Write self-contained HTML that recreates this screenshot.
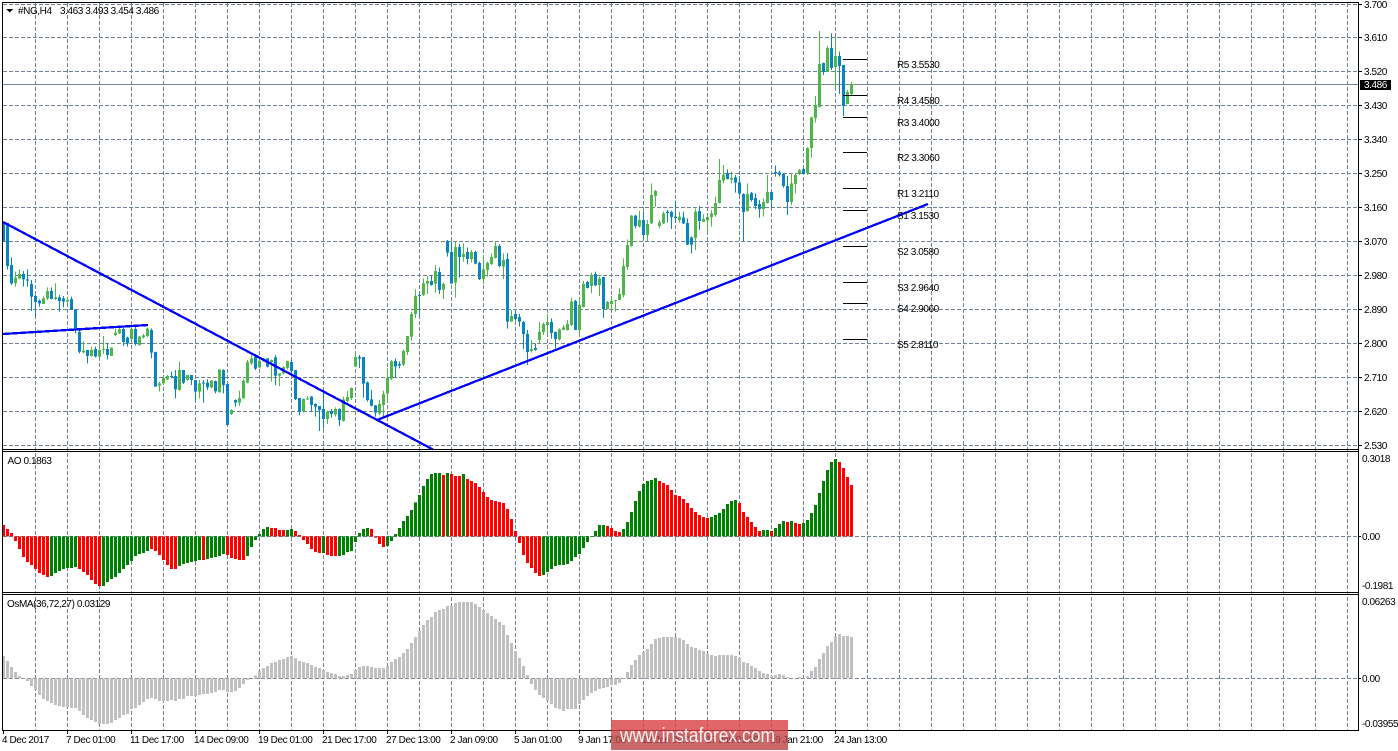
<!DOCTYPE html>
<html><head><meta charset="utf-8"><title>#NG,H4</title>
<style>
html,body{margin:0;padding:0;background:#fff;width:1398px;height:751px;overflow:hidden}
svg{display:block}
text{font-family:"Liberation Sans",sans-serif;font-size:10px;letter-spacing:-.42px;fill:#000}
.g{stroke:#708090;stroke-width:1;stroke-dasharray:4 2;fill:none}
</style></head><body>
<svg width="1398" height="751" viewBox="0 0 1398 751" xmlns="http://www.w3.org/2000/svg" shape-rendering="crispEdges">
<defs><linearGradient id="w" x1="0" y1="0" x2="0" y2="1"><stop offset="0" stop-color="#d84045"/><stop offset=".4" stop-color="#d84045"/><stop offset=".5" stop-color="#bb4244"/><stop offset="1" stop-color="#bb4244"/></linearGradient></defs>
<!-- grid -->
<path class="g" d="M3 4.5H1358M3 37.5H1358M3 71.5H1358M3 105.5H1358M3 139.5H1358M3 173.5H1358M3 207.5H1358M3 241.5H1358M3 275.5H1358M3 309.5H1358M3 343.5H1358M3 377.5H1358M3 411.5H1358M3 445.5H1358M3 536.5H1358M3 678.5H1358"/>
<path class="g" d="M35.5 3V730M67.5 3V730M99.5 3V730M131.5 3V730M163.5 3V730M195.5 3V730M227.5 3V730M259.5 3V730M291.5 3V730M323.5 3V730M355.5 3V730M387.5 3V730M419.5 3V730M451.5 3V730M483.5 3V730M515.5 3V730M547.5 3V730M579.5 3V730M611.5 3V730M643.5 3V730M675.5 3V730M707.5 3V730M739.5 3V730M771.5 3V730M803.5 3V730M835.5 3V730M867.5 3V730M899.5 3V730M931.5 3V730M963.5 3V730M995.5 3V730M1027.5 3V730M1059.5 3V730M1091.5 3V730M1123.5 3V730M1155.5 3V730M1187.5 3V730M1219.5 3V730M1251.5 3V730M1283.5 3V730M1315.5 3V730M1347.5 3V730"/>
<rect x="3" y="84" width="1355" height="1" fill="#778899"/>
<!-- candles group 1 -->
<g transform="translate(3.5,230) scale(4,.33333)" fill="none">
<path stroke="#0685c4" stroke-width=".25" d="M0 -21V35M1 -21V118M2 82V165M5 123V170M6 118V170M7 150V243M8 195V258M9 208V230M12 172V208M14 195V245M15 198V232M17 200V240M18 238V310M19 300V370M21 360V400M23 350V382M26 340V388M30 292V348M31 320V350M33 290V347M37 295V385M38 365V470M42 425V445M43 420V505M45 420V462M47 435V465M48 450V512M50 450V518M51 448V480M53 452V490M55 418V490M56 462V585M58 508V530M63 372V420M66 385V412M68 375V465M72 390V430M73 420V510M74 504V556M77 498V545M78 520V560M79 528V603M80 483V595M82 537V562M84 535V588"/>
<path stroke="#0685c4" stroke-width=".75" d="M0 -21V35M1 -21V108M2 105V160M5 132V148M6 148V152M7 162V200M8 198V216M9 212V220M12 183V207M14 202V213M15 205V215M17 207V238M18 238V295M19 306V365M21 360V378M23 357V380M26 357V375M30 297V336M31 323V340M33 297V342M37 300V368M38 366V470M42 438V441M43 438V478M45 420V458M47 435V450M48 450V485M50 458V461M51 458V472M53 453V484M55 420V465M56 462V585M58 510V518M63 380V416M66 385V410M68 382V437M72 396V423M73 420V507M74 504V545M77 500V525M78 522V530M79 528V540M80 537V567M82 543V552M84 537V570"/>
<path stroke="#4db848" stroke-width=".25" d="M3 125V170M4 118V148M10 200V222M11 172V210M13 160V210M16 200V218M20 335V370M22 350V380M24 340V382M25 318V372M27 352V378M28 295V318M29 290V312M32 290V330M34 318V347M35 312V325M36 292V322M39 455V485M40 438V462M41 435V450M44 395V482M46 435V452M49 450V505M52 450V475M54 418V487M57 538V555M59 482V528M60 448V505M61 390V460M62 375V405M64 385V415M65 383V395M67 388V455M69 430V468M70 408V433M71 392V418M75 505V548M76 498V510M81 542V582M83 532V560"/>
<path stroke="#4db848" stroke-width=".75" d="M3 143V160M4 132V145M10 205V222M11 183V205M13 202V207M16 210V215M20 362V367M22 360V378M24 360V380M25 357V360M27 353V378M28 308V315M29 297V310M32 297V327M34 320V345M35 316V322M36 296V318M39 460V467M40 444V460M41 438V448M44 420V480M46 435V450M49 460V485M52 452V472M54 418V487M57 540V552M59 504V518M60 452V505M61 396V458M62 386V400M64 392V412M65 385V393M67 390V396M69 430V437M70 412V430M71 393V414M75 507V545M76 505V508M81 545V567M83 537V553"/>
</g>
<!-- candles group 2 -->
<g transform="translate(3.5,220) scale(4,.33333)" fill="none">
<path stroke="#0685c4" stroke-width=".25" d="M89 405V444M90 411V533M91 485V545M92 510V560M93 555V590M98 415V472M99 425V445M104 222V290M107 165V197M109 143V222M111 60V110M112 65V190M114 72V173M116 82V133M118 92V133M119 125V180M124 72V142M126 99V326M128 270V302M129 282V320M130 303V387M131 330V435M133 370V392M137 295V356M138 335V385M143 240V330M146 183V205M148 155V198M150 171V294"/>
<path stroke="#0685c4" stroke-width=".75" d="M89 411V416M90 411V491M91 487V540M92 538V557M93 556V578M98 423V440M99 432V437M104 225V228M107 183V195M109 156V210M111 63V98M112 96V191M114 81V111M116 96V117M118 96V131M119 129V177M124 78V138M126 117V305M128 282V297M129 291V305M130 306V342M131 342V396M133 384V390M137 306V339M138 336V357M143 243V330M146 186V204M148 162V196M150 171V267"/>
<path stroke="#4db848" stroke-width=".25" d="M85 530V605M86 513V548M87 503V540M88 398V440M94 540V585M95 512V590M96 445V545M97 420V480M100 388V438M101 348V405M102 275V362M103 208V295M105 175V228M106 168V222M108 135V218M110 188V237M113 63V233M115 70V125M117 90V127M120 105V192M121 125V170M122 100V135M123 63V115M125 100V177M127 270V305M132 360V398M134 306V370M135 308V345M136 282V340M139 325V362M140 315V330M141 300V332M142 232V318M144 237V345M145 183V262M147 158V220M149 170V228M151 243V268M152 228V270M153 240V275M154 205V240M155 115V232M156 58V150"/>
<path stroke="#4db848" stroke-width=".75" d="M85 538V603M86 531V543M87 504V534M88 411V440M94 552V580M95 522V555M96 473V521M97 424V476M100 393V434M101 348V396M102 282V350M103 228V282M105 190V225M106 183V191M108 153V191M110 192V209M113 81V188M115 102V111M117 96V117M120 148V177M121 129V150M122 111V132M123 78V114M125 120V140M127 288V305M132 387V393M134 336V360M135 312V336M136 306V315M139 328V358M140 322V330M141 312V330M142 244V315M144 255V330M145 192V261M147 165V198M149 175V195M151 246V267M152 243V252M153 240V243M154 222V240M155 138V225M156 75V141"/>
</g>
<!-- candles group 3 -->
<g transform="translate(3.5,20) scale(4,.33333)" fill="none">
<path stroke="#0685c4" stroke-width=".25" d="M158 585V625M160 575V655M166 570V607M167 572V627M168 542V605M170 575V612M171 595V675M172 650V700M174 558V630M181 448V478M183 465V518M184 468V525M185 520V663M187 516V545M188 520V568M189 540V593M192 516V565M193 437V470M194 452V470M195 460V503M196 468V585M200 445V463M205 128V165M207 40V150M209 95V222M210 135V288"/>
<path stroke="#0685c4" stroke-width=".75" d="M158 587V618M160 600V645M166 575V579M167 576V591M168 590V594M170 593V610M171 609V674M172 652V674M174 573V603M181 459V477M183 472V488M184 487V521M185 522V576M187 519V540M188 534V558M189 552V567M192 516V540M193 456V460M194 457V464M195 462V498M196 498V546M200 447V462M205 129V156M207 84V144M209 108V138M210 135V258"/>
<path stroke="#4db848" stroke-width=".25" d="M157 585V680M159 573V622M161 600V663M162 490V612M163 510V560M164 600V625M165 575V612M169 575V608M173 565V690M175 583V606M176 585V640M177 570V620M178 530V590M179 417V550M180 435V490M182 455V490M186 490V575M190 535V590M191 465V550M197 460V555M198 460V520M199 447V465M201 382V465M202 290V412M203 228V308M204 33V262M206 78V155M208 48V203M211 210V252M212 186V228"/>
<path stroke="#4db848" stroke-width=".75" d="M157 587V678M159 600V620M161 612V645M162 525V610M163 513V528M164 607V618M165 580V610M169 590V600M173 575V654M175 597V606M176 591V601M177 580V591M178 549V585M179 480V549M180 465V482M182 474V479M186 522V573M190 546V567M191 516V549M197 490V546M198 465V492M199 450V462M201 384V459M202 292V384M203 255V294M204 132V261M206 84V155M208 108V141M211 216V252M212 192V222"/>
</g>
<!-- pivots -->
<path stroke="#000" stroke-width="1" fill="none" d="M843 59.5H867M843 95.5H867M843 117.5H867M843 152.5H867M843 188.5H867M843 210.5H867M843 246.5H867M843 282.5H867M843 303.5H867M843 339.5H867"/>
<!-- trend lines -->
<g fill="none" stroke="#0000ff" stroke-width="2.3">
<path d="M3 222L433 449.5"/>
<path d="M3 334L148 325"/>
<path d="M377 420L928 204"/>
</g>
<!-- AO and OsMA histograms -->
<g transform="translate(3.5,440) scale(4,.33333)" fill="none" stroke-width=".75">
<path stroke="#ff0000" d="M0 289V255M1 289V267M2 289V279M3 289V303M4 289V327M5 289V351M6 289V366M7 289V375M8 289V387M9 289V399M10 289V405M11 289V411M19 289V387M20 289V396M21 289V405M22 289V420M23 289V432M24 289V438M37 289V327M38 289V333M39 289V345M40 289V360M41 289V375M42 289V387M43 289V387M50 289V360M56 289V345M57 289V354M58 289V357M59 289V360M60 289V360M67 289V264M68 289V264M69 289V270M70 289V270M73 289V273M74 289V285M75 289V300M76 289V312M77 289V327M78 289V336M79 289V339M81 289V345M82 289V348M83 289V348M92 289V267M93 289V293M94 289V312M95 289V321M110 289V105M112 289V102M113 289V108M114 289V108M116 289V117M117 289V123M118 289V129M119 289V141M120 289V156M121 289V171M122 289V180M123 289V183M124 289V186M125 289V189M126 289V207M127 289V237M128 289V273M129 289V309M130 289V345M131 289V369M132 289V384M133 289V399M134 289V408M151 289V258M152 289V264M153 289V273M154 289V276M164 289V123M165 289V129M166 289V135M167 289V150M168 289V165M169 289V168M170 289V177M171 289V189M172 289V204M173 289V216M174 289V225M175 289V231M176 289V234M184 289V189M185 289V216M186 289V231M187 289V246M188 289V261M189 289V273M192 289V273M196 289V246M198 289V249M199 289V252M209 289V66M210 289V84M211 289V111M212 289V135"/>
<path stroke="#008000" d="M12 289V408M13 289V399M14 289V393M15 289V387M16 289V384M17 289V384M18 289V381M25 289V438M26 289V426M27 289V417M28 289V411M29 289V399M30 289V387M31 289V375M32 289V363M33 289V348M34 289V342M35 289V339M36 289V333M44 289V378M45 289V372M46 289V369M47 289V366M48 289V363M49 289V360M51 289V357M52 289V354M53 289V351M54 289V348M55 289V342M61 289V348M62 289V321M63 289V300M64 289V282M65 289V267M66 289V261M71 289V270M72 289V267M80 289V339M84 289V348M85 289V345M86 289V336M87 289V333M88 289V306M89 289V279M90 289V267M91 289V264M96 289V318M97 289V303M98 289V282M99 289V264M100 289V243M101 289V228M102 289V210M103 289V187M104 289V165M105 289V138M106 289V117M107 289V102M108 289V99M109 289V99M111 289V99M115 289V102M135 289V405M136 289V396M137 289V387M138 289V378M139 289V375M140 289V375M141 289V372M142 289V363M143 289V351M144 289V342M145 289V324M146 289V306M147 289V291M148 289V273M149 289V255M150 289V255M155 289V267M156 289V246M157 289V216M158 289V183M159 289V153M160 289V132M161 289V123M162 289V120M163 289V114M177 289V231M178 289V225M179 289V219M180 289V207M181 289V192M182 289V183M183 289V180M190 289V270M191 289V270M193 289V264M194 289V252M195 289V243M197 289V243M200 289V249M201 289V240M202 289V219M203 289V195M204 289V159M205 289V123M206 289V90M207 289V66M208 289V57"/>
<path stroke="#c0c0c0" d="M0 715V648M1 715V663M2 715V681M3 715V696M4 715V708M5 715V714M6 715V723M7 715V738M8 715V750M9 715V765M10 715V777M11 715V783M12 715V789M13 715V795M14 715V798M15 715V801M16 715V801M17 715V804M18 715V804M19 715V813M20 715V825M21 715V834M22 715V840M23 715V846M24 715V852M25 715V852M26 715V852M27 715V849M28 715V840M29 715V834M30 715V825M31 715V822M32 715V807M33 715V804M34 715V795M35 715V786M36 715V777M37 715V774M38 715V777M39 715V783M40 715V783M41 715V783M42 715V780M43 715V783M44 715V777M45 715V777M46 715V768M47 715V768M48 715V768M49 715V765M50 715V762M51 715V762M52 715V759M53 715V756M54 715V750M55 715V750M56 715V756M57 715V756M58 715V753M59 715V744M60 715V732M61 715V720M63 715V706M64 715V693M65 715V684M66 715V678M67 715V669M68 715V666M69 715V660M70 715V657M71 715V651M72 715V648M73 715V654M74 715V663M75 715V666M76 715V669M77 715V675M78 715V681M79 715V684M80 715V690M81 715V696M82 715V699M83 715V702M84 715V708M85 715V708M86 715V705M87 715V702M88 715V690M89 715V681M90 715V678M91 715V678M92 715V681M93 715V684M94 715V684M95 715V684M96 715V678M97 715V666M98 715V657M99 715V651M100 715V639M101 715V627M102 715V609M103 715V591M104 715V573M105 715V555M106 715V540M107 715V531M108 715V516M109 715V510M110 715V507M111 715V498M112 715V498M113 715V489M114 715V486M115 715V486M116 715V486M117 715V486M118 715V492M119 715V501M120 715V510M121 715V519M122 715V528M123 715V537M124 715V546M125 715V555M126 715V585M127 715V609M128 715V633M129 715V654M130 715V678M131 715V705M132 715V732M133 715V750M134 715V765M135 715V774M136 715V783M137 715V792M138 715V804M139 715V807M140 715V813M141 715V807M142 715V807M143 715V807M144 715V792M145 715V780M146 715V768M147 715V759M148 715V753M149 715V747M150 715V744M151 715V741M152 715V735M153 715V735M154 715V729M155 715V717M156 715V696M157 715V675M158 715V660M159 715V645M160 715V636M161 715V627M162 715V612M163 715V597M164 715V594M165 715V591M166 715V591M167 715V591M168 715V591M169 715V594M170 715V600M171 715V612M172 715V621M173 715V624M174 715V630M175 715V633M176 715V642M177 715V645M178 715V648M179 715V645M180 715V645M181 715V645M182 715V645M183 715V648M184 715V654M185 715V666M186 715V669M187 715V678M188 715V684M189 715V693M190 715V699M191 715V702M192 715V708M193 715V705M194 715V702M195 715V705M196 715V711M197 715V714M198 715V714M199 715V711M200 715V714M201 715V708M202 715V693M203 715V681M204 715V657M205 715V639M206 715V618M207 715V606M208 715V591M209 715V582M210 715V588M211 715V588M212 715V591"/>
</g>
<!-- frames -->
<g fill="#000">
<rect x="2" y="2" width="1" height="729"/>
<rect x="2" y="2" width="1357" height="1"/>
<rect x="1358" y="2" width="1" height="729"/>
<rect x="2" y="449" width="1357" height="1"/>
<rect x="2" y="451" width="1357" height="1"/>
<rect x="2" y="592" width="1357" height="1"/>
<rect x="2" y="594" width="1357" height="1"/>
<rect x="2" y="730" width="1357" height="1"/>
<rect x="1360" y="80" width="31" height="10"/>
<path d="M6 9h7l-3.5 3.5z"/>
</g>
<path stroke="#000" fill="none" d="M1359 4.5h3M1359 37.5h3M1359 71.5h3M1359 105.5h3M1359 139.5h3M1359 173.5h3M1359 207.5h3M1359 241.5h3M1359 275.5h3M1359 309.5h3M1359 343.5h3M1359 377.5h3M1359 411.5h3M1359 445.5h3M1359 536.5h2M1359 678.5h2M3.5 731v3M67.5 731v3M131.5 731v3M195.5 731v3M259.5 731v3M323.5 731v3M387.5 731v3M451.5 731v3M515.5 731v3M579.5 731v3M643.5 731v3M707.5 731v3M771.5 731v3M835.5 731v3"/>
<!-- text -->
<g>
<text x="18" y="14">#NG,H4</text>
<text x="60" y="14">3.463 3.493 3.454 3.486</text>
<text x="7.5" y="464">AO 0.1863</text>
<text x="7" y="607">OsMA(36,72,27) 0.03129</text>
<text x="1364" y="8">3.700</text><text x="1364" y="41">3.610</text><text x="1364" y="75">3.520</text>
<text x="1364" y="88" style="fill:#fff">3.486</text>
<text x="1364" y="109">3.430</text><text x="1364" y="143">3.340</text><text x="1364" y="177">3.250</text><text x="1364" y="211">3.160</text><text x="1364" y="245">3.070</text><text x="1364" y="279">2.980</text><text x="1364" y="313">2.890</text><text x="1364" y="347">2.800</text><text x="1364" y="381">2.710</text><text x="1364" y="415">2.620</text><text x="1364" y="449">2.530</text>
<text x="1362" y="462">0.3018</text><text x="1362" y="540">0.00</text><text x="1362" y="589">-0.1981</text>
<text x="1362" y="605">0.06263</text><text x="1362" y="682">0.00</text><text x="1362" y="727">-0.03955</text>
<text x="897" y="68">R5 3.5530</text><text x="897" y="104">R4 3.4580</text><text x="897" y="126">R3 3.4000</text><text x="897" y="161">R2 3.3060</text><text x="897" y="197">R1 3.2110</text><text x="897" y="219">S1 3.1530</text><text x="897" y="255">S2 3.0580</text><text x="897" y="291">S3 2.9640</text><text x="897" y="312">S4 2.9060</text><text x="897" y="348">S5 2.8110</text>
<text x="2" y="743">4 Dec 2017</text><text x="66" y="743">7 Dec 01:00</text><text x="130" y="743">11 Dec 17:00</text><text x="194" y="743">14 Dec 09:00</text><text x="258" y="743">19 Dec 01:00</text><text x="322" y="743">21 Dec 17:00</text><text x="386" y="743">27 Dec 13:00</text><text x="450" y="743">2 Jan 09:00</text><text x="514" y="743">5 Jan 01:00</text><text x="578" y="743">9 Jan 17:00</text><text x="642" y="743">12 Jan 09:00</text><text x="706" y="743">17 Jan 01:00</text><text x="770" y="743">19 Jan 21:00</text><text x="834" y="743">24 Jan 13:00</text>
</g>
<!-- watermark -->
<rect x="611" y="720" width="177" height="30" fill="url(#w)" fill-opacity=".8"/>
<text x="620" y="742" textLength="155" lengthAdjust="spacingAndGlyphs" shape-rendering="auto" style="font-size:20px;letter-spacing:0;fill:#fff;fill-opacity:.92">www.instaforex.com</text>
</svg>
</body></html>
